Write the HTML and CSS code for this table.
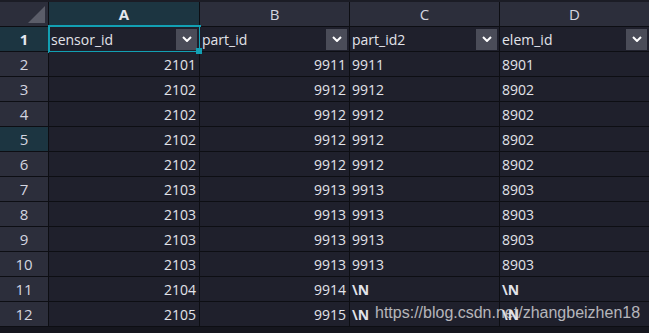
FILE: index.html
```html
<!DOCTYPE html>
<html>
<head>
<meta charset="utf-8">
<link rel="stylesheet" href="styles.css">
</head>
<body>
<div class="page">
  <div class="sheet">
    <div class="corner"><span class="tri"></span></div>
    <div class="colhead sel">A</div>
    <div class="colhead">B</div>
    <div class="colhead">C</div>
    <div class="colhead">D</div>

    <div class="rowhead sel">1</div>
    <div class="cell fh active"><span>sensor_id</span><span class="dd"><svg width="10" height="6" viewBox="0 0 10 6"><path d="M1 1 L5 5 L9 1" fill="none" stroke="#fff" stroke-width="2"/></svg></span></div>
    <div class="cell fh"><span>part_id</span><span class="dd"><svg width="10" height="6" viewBox="0 0 10 6"><path d="M1 1 L5 5 L9 1" fill="none" stroke="#fff" stroke-width="2"/></svg></span></div>
    <div class="cell fh"><span>part_id2</span><span class="dd"><svg width="10" height="6" viewBox="0 0 10 6"><path d="M1 1 L5 5 L9 1" fill="none" stroke="#fff" stroke-width="2"/></svg></span></div>
    <div class="cell fh"><span>elem_id</span><span class="dd"><svg width="10" height="6" viewBox="0 0 10 6"><path d="M1 1 L5 5 L9 1" fill="none" stroke="#fff" stroke-width="2"/></svg></span></div>

    <div class="rowhead">2</div><div class="cell num">2101</div><div class="cell num">9911</div><div class="cell">9911</div><div class="cell">8901</div>
    <div class="rowhead">3</div><div class="cell num">2102</div><div class="cell num">9912</div><div class="cell">9912</div><div class="cell">8902</div>
    <div class="rowhead">4</div><div class="cell num">2102</div><div class="cell num">9912</div><div class="cell">9912</div><div class="cell">8902</div>
    <div class="rowhead hover">5</div><div class="cell num">2102</div><div class="cell num">9912</div><div class="cell">9912</div><div class="cell">8902</div>
    <div class="rowhead">6</div><div class="cell num">2102</div><div class="cell num">9912</div><div class="cell">9912</div><div class="cell">8902</div>
    <div class="rowhead">7</div><div class="cell num">2103</div><div class="cell num">9913</div><div class="cell">9913</div><div class="cell">8903</div>
    <div class="rowhead">8</div><div class="cell num">2103</div><div class="cell num">9913</div><div class="cell">9913</div><div class="cell">8903</div>
    <div class="rowhead">9</div><div class="cell num">2103</div><div class="cell num">9913</div><div class="cell">9913</div><div class="cell">8903</div>
    <div class="rowhead">10</div><div class="cell num">2103</div><div class="cell num">9913</div><div class="cell">9913</div><div class="cell">8903</div>
    <div class="rowhead">11</div><div class="cell num">2104</div><div class="cell num">9914</div><div class="cell nul">\N</div><div class="cell nul">\N</div>
    <div class="rowhead">12</div><div class="cell num">2105</div><div class="cell num">9915</div><div class="cell nul">\N</div><div class="cell nul">\N</div>
  </div>
  <div class="watermark">https://blog.csdn.net/zhangbeizhen18</div>
</div>
</body>
</html>
```
FILE: styles.css
```css
html, body {
  margin: 0;
  padding: 0;
  background: #15161e;
}
.page {
  position: relative;
  width: 649px;
  height: 333px;
  overflow: hidden;
  background: #15161e;
  font-family: "Open Sans", "Noto Sans", sans-serif;
}
.sheet {
  display: grid;
  grid-template-columns: 48px 150px 149px 149px 149px;
  grid-template-rows: 24px repeat(12, 24px);
  gap: 1px;
  background: #0d0e13;
  border-top: 2px solid #1b1c25;
  padding-bottom: 1px;
}
.corner {
  position: relative;
  background: #2c2e3b;
}
.tri {
  position: absolute;
  right: 3px;
  bottom: 3px;
  width: 0;
  height: 0;
  border-left: 17px solid transparent;
  border-bottom: 17px solid #5b5d69;
}
.colhead {
  background: #2c2e3b;
  color: #d4d6e0;
  font-size: 15px;
  display: flex;
  align-items: center;
  justify-content: center;
}
.colhead.sel {
  background: #1c3541;
  font-weight: 700;
  color: #e6e8ef;
}
.rowhead {
  background: #2c2e3b;
  color: #d4d6e0;
  font-size: 15px;
  display: flex;
  align-items: center;
  justify-content: center;
}
.rowhead.sel {
  background: #1c3541;
  font-weight: 700;
  color: #e6e8ef;
}
.rowhead.hover {
  background: #1c3541;
}
.cell {
  position: relative;
  background: #1f202c;
  color: #e2e3ea;
  font-size: 14px;
  display: flex;
  align-items: center;
  padding: 0 2px;
  white-space: nowrap;
}
.cell.num {
  justify-content: flex-end;
  padding-right: 3px;
}
.cell.nul {
  font-weight: 700;
}
.cell.fh {
  justify-content: space-between;
  padding-right: 2px;
}
.dd {
  width: 21px;
  height: 21px;
  background: #4a4c58;
  display: flex;
  align-items: center;
  justify-content: center;
}
.cell.active::after {
  content: "";
  position: absolute;
  left: -1px;
  top: -2px;
  right: -2px;
  bottom: -2px;
  border: 2px solid #12a0b3;
  pointer-events: none;
}
.cell.active::before {
  content: "";
  position: absolute;
  right: -3px;
  bottom: -3px;
  width: 6px;
  height: 6px;
  background: #12a0b3;
  z-index: 2;
}
.watermark {
  position: absolute;
  left: 375px;
  top: 304px;
  font-family: "Liberation Sans", Arial, sans-serif;
  font-size: 16px;
  line-height: 18px;
  color: rgba(225, 225, 228, 0.78);
  white-space: nowrap;
}
```
